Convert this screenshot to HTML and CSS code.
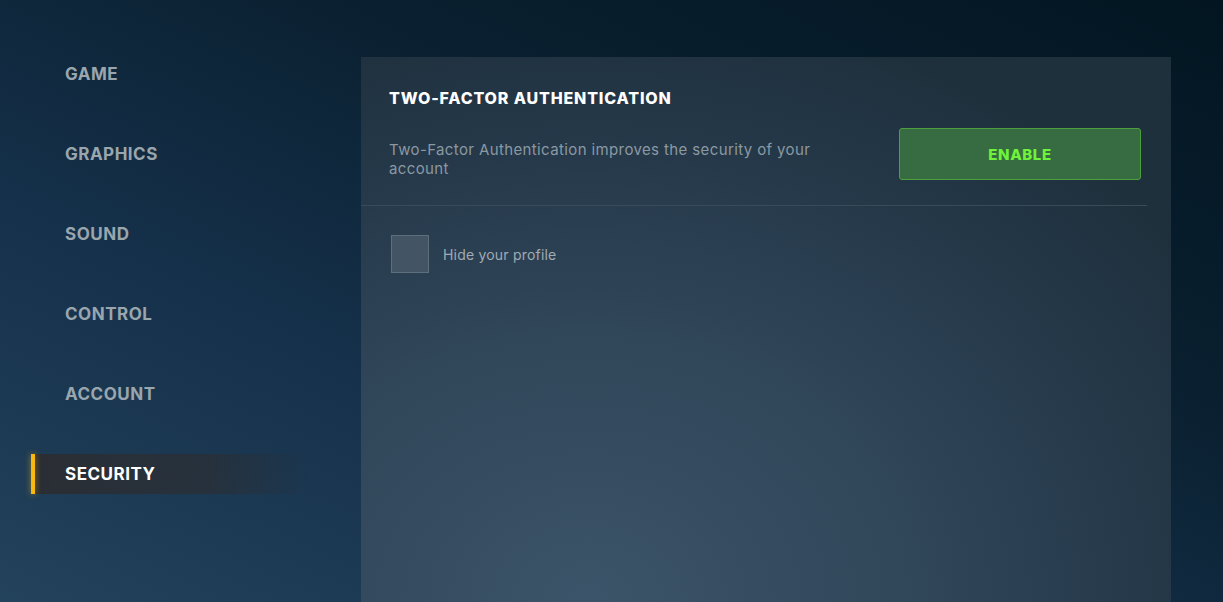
FILE: index.html
```html
<!DOCTYPE html>
<html lang="en">
<head>
    <meta charset="UTF-8">
    <meta name="viewport" content="width=device-width, initial-scale=1.0">
    <title>Settings - Security</title>
    <link rel="stylesheet" href="styles.css">
</head>
<body>
    <div class="settings">
        <nav class="sidebar">
            <a class="nav-item" href="#">GAME</a>
            <a class="nav-item" href="#">GRAPHICS</a>
            <a class="nav-item" href="#">SOUND</a>
            <a class="nav-item" href="#">CONTROL</a>
            <a class="nav-item" href="#">ACCOUNT</a>
            <a class="nav-item active" href="#">SECURITY</a>
        </nav>

        <main class="panel">
            <section class="section">
                <h2 class="section-title">TWO-FACTOR AUTHENTICATION</h2>
                <div class="section-row">
                    <p class="section-text">Two-Factor Authentication improves the security of your account</p>
                    <button class="btn-enable" type="button">ENABLE</button>
                </div>
            </section>

            <label class="check-row">
                <input type="checkbox" class="check-input">
                <span class="check-box"></span>
                <span class="check-label">Hide your profile</span>
            </label>
        </main>
    </div>
</body>
</html>
```

FILE: styles.css
```css
html, body {
    height: 100%;
}

body {
    margin: 0;
    font-family: Inter, Roboto, "Liberation Sans", sans-serif;
    background: linear-gradient(25deg, #23425b 0%, #15304a 35%, #0a2030 65%, #021521 100%);
    overflow: hidden;
}

.settings {
    display: flex;
    height: 100%;
}

.sidebar {
    width: 330px;
    margin-left: 31px;
    padding-top: 54px;
    display: flex;
    flex-direction: column;
    gap: 40px;
}

.nav-item {
    position: relative;
    display: flex;
    align-items: center;
    width: 245px;
    height: 40px;
    padding-left: 34px;
    color: #9aa6ae;
    font-size: 17px;
    font-weight: 700;
    letter-spacing: 0.5px;
    text-decoration: none;
}

.nav-item.active {
    color: #ffffff;
    background: linear-gradient(90deg, rgba(44, 44, 48, 0.9) 0%, rgba(42, 46, 52, 0.7) 65%, rgba(40, 50, 60, 0) 100%);
}

.nav-item.active::before {
    content: "";
    position: absolute;
    left: 0;
    top: 0;
    width: 4px;
    height: 40px;
    background-color: #f7b90f;
    box-shadow: 0 0 6px rgba(247, 185, 15, 0.55);
}

.panel {
    width: 810px;
    margin-top: 57px;
    background: radial-gradient(ellipse 90% 110% at 28% 100%, #3c5469 0%, #304659 45%, #25394a 75%, #1f303d 100%);
}

.section {
    margin-right: 24px;
    padding: 31px 6px 25px 28px;
    border-bottom: 1px solid #3a4b58;
}

.section-title {
    margin: 0;
    color: #ffffff;
    font-size: 16px;
    font-weight: 800;
    line-height: 20px;
    letter-spacing: 0.85px;
}

.section-row {
    display: flex;
    justify-content: space-between;
    align-items: flex-end;
    margin-top: 20px;
}

.section-text {
    margin: 0 0 2px;
    width: 450px;
    color: #8b98a2;
    font-size: 15px;
    line-height: 19px;
    letter-spacing: 0.38px;
}

.btn-enable {
    width: 242px;
    height: 52px;
    background-color: #376b41;
    border: 1px solid #4e9f3d;
    border-radius: 3px;
    color: #6ef23a;
    font-family: inherit;
    font-size: 15px;
    font-weight: 800;
    letter-spacing: 0.6px;
    cursor: pointer;
}

.check-row {
    display: flex;
    align-items: center;
    gap: 14px;
    margin: 29px 0 0 30px;
    cursor: pointer;
}

.check-input {
    display: none;
}

.check-box {
    width: 36px;
    height: 36px;
    background-color: #435565;
    border: 1px solid #5d6e7c;
}

.check-label {
    color: #a0abb4;
    font-size: 14px;
    letter-spacing: 0.2px;
}
```
